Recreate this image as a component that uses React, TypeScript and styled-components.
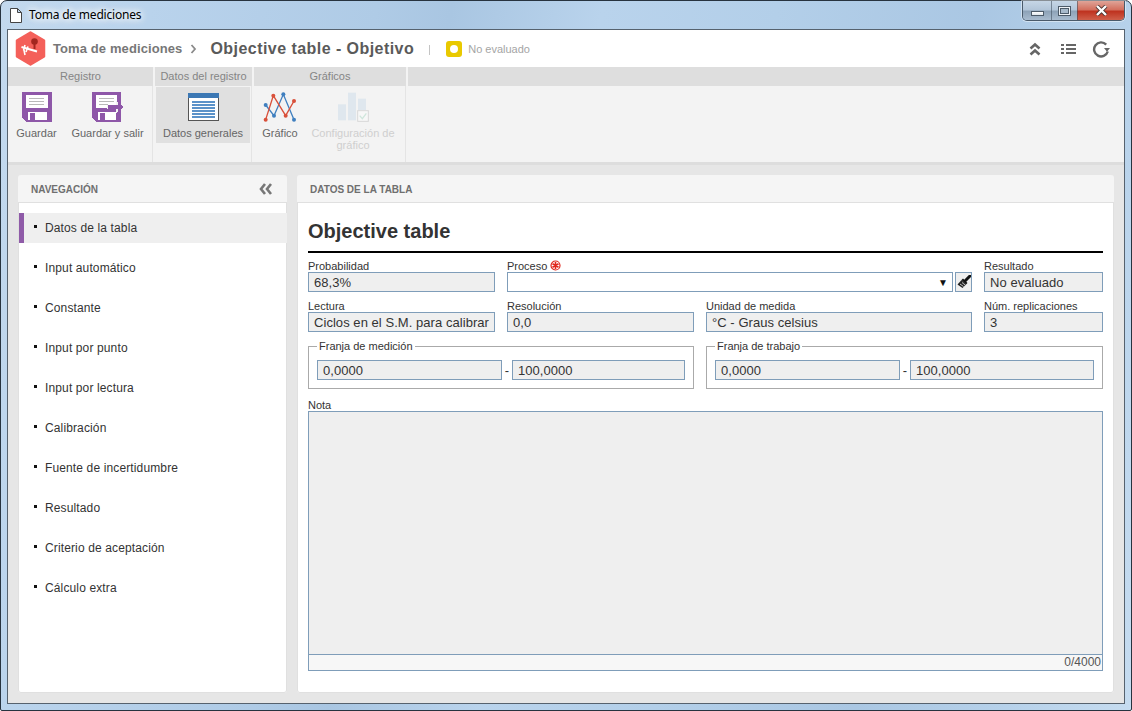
import React from "react";
import styled, { createGlobalStyle } from "styled-components";

const Global = createGlobalStyle`
  html, body { margin: 0; padding: 0; width: 1132px; height: 711px; overflow: hidden; background: #fff; }
  #root { width: 1132px; height: 711px; }
  * { box-sizing: border-box; }
`;

const Win = styled.div`
  width: 1132px; height: 711px;
  display: flex; flex-direction: column;
  border: 1px solid #27333f;
  border-radius: 7px 7px 2px 2px;
  padding: 0 6px 6px 6px;
  background: linear-gradient(100deg, #c3d9ee 0%, #b9d3ec 12%, #afcbe6 30%, #a9c6e2 36%, #b9d3ec 48%, #b3cfe9 62%, #aac7e3 78%, #b6d1ea 90%, #c6dcf0 100%);
  font-family: "Liberation Sans", Arial, sans-serif;
  color: #333;
`;
const TitleBar = styled.div`
  height: 28px; flex: none;
  display: flex; align-items: flex-start;
`;
const DocIcon = styled.svg`
  width: 12px; height: 15px; margin: 7px 0 0 3px; flex: none;
`;
const WinTitle = styled.div`
  margin: 6px 0 0 7px;
  font: 12px/16px "Noto Sans", "Open Sans", sans-serif;
  letter-spacing: -0.2px;
  color: #000;
  text-shadow: 0 0 6px #fff, 0 0 8px #fff, 0 0 10px #fff;
`;
const WinButtons = styled.div`
  margin-left: auto;
  display: flex; height: 20px;
  border: 1px solid #4a5a6a; border-top: none;
  border-radius: 0 0 5px 5px;
  overflow: hidden;
  box-shadow: 0 0 0 1px rgba(255,255,255,.45);
`;
const WinButton = styled.div<{ $w: number; $close?: boolean }>`
  width: ${p => p.$w}px; height: 100%;
  display: flex; align-items: center; justify-content: center;
  border-left: 1px solid rgba(60,75,90,.55);
  &:first-child { border-left: none; }
  background: ${p => p.$close
    ? "linear-gradient(#dfa498 0%, #d3705f 45%, #bf3320 55%, #cf5f4a 100%)"
    : "linear-gradient(#c6d6e6 0%, #b3c6d9 45%, #8ea3b8 55%, #a9bccf 100%)"};
`;
const MinGlyph = styled.div`
  width: 13px; height: 5px; margin-top: 6px;
  background: linear-gradient(#fff, #dfe6ec); border: 1px solid #4d5b69;
`;
const MaxGlyph = styled.div`
  width: 13px; height: 10px;
  background: #eef2f6; border: 1px solid #4d5b69;
  display: flex; align-items: center; justify-content: center;
  &::after { content: ""; width: 7px; height: 4px; background: #a8bacb; border: 1px solid #4d5b69; }
`;
const CloseGlyph = styled.svg`
  width: 13px; height: 11px;
`;

const Frame = styled.div`
  flex: 1; min-height: 0;
  display: flex; flex-direction: column;
  border: 1px solid #56626e;
  background: #e6e6e6;
`;
const Head = styled.header`
  height: 37px; flex: none;
  background: #fff;
  display: flex; align-items: center;
  padding: 0 14px 0 7px;
`;
const Logo = styled.svg`
  width: 31px; height: 35px; flex: none;
`;
const Crumb = styled.span`
  margin-left: 7px;
  font-size: 13px; font-weight: bold; color: #777;
  letter-spacing: 0.1px;
`;
const CrumbArrow = styled.svg`
  width: 7px; height: 10px; margin: 0 13px 0 8px; flex: none;
`;
const DocTitle = styled.span`
  font-size: 16px; font-weight: bold; color: #5a5a5a;
  letter-spacing: 0.45px;
`;
const Sep = styled.span`
  width: 1px; height: 10px; background: #c4c4c4; margin: 2px 16px 0 15px;
`;
const Badge = styled.span`
  width: 16px; height: 16px; border-radius: 3px; background: #e9c900;
  display: flex; align-items: center; justify-content: center; flex: none;
  &::after { content: ""; width: 8px; height: 8px; border-radius: 50%; background: #fff; }
`;
const BadgeText = styled.span`
  margin-left: 6px; font-size: 11px; color: #a5a5a5;
`;
const HeadTools = styled.div`
  margin-left: auto;
  display: flex; align-items: center; gap: 15px;
`;
const HeadIcon = styled.svg`
  width: 18px; height: 18px; flex: none; display: block;
`;

const Ribbon = styled.div`
  flex: none; display: flex; gap: 2px;
  background: #f3f3f3;
  border-bottom: 3px solid #dddddd;
  height: 98px;
`;
const Group = styled.section<{ $w?: number }>`
  ${p => (p.$w ? `width: ${p.$w}px; flex: none;` : "flex: 1;")}
  display: flex; flex-direction: column;
`;
const GroupLabel = styled.div`
  height: 19px; flex: none; background: #dedede;
  font-size: 11px; line-height: 19px; text-align: center; color: #858585;
`;
const GroupBody = styled.div`
  flex: 1; display: flex; align-items: flex-start;
  padding: 1px 0 0 0;
  border-right: 1px solid #e4e4e4;
`;
const RBtn = styled.div<{ $w: number; $active?: boolean; $off?: boolean }>`
  width: ${p => p.$w}px; height: 56px; flex: none;
  margin-left: ${p => (p.$active ? "1px" : "0")};
  background: ${p => (p.$active ? "#e0e0e0" : "transparent")};
  display: flex; flex-direction: column; align-items: center;
  font-size: 11px; line-height: 12px; text-align: center;
  color: ${p => (p.$off ? "#cfcfcf" : "#666")};
`;
const RIcon = styled.div`
  height: 40px; flex: none; display: flex; align-items: center; justify-content: center;
`;
const RText = styled.div`
  padding: 0 4px;
`;

const Main = styled.main`
  flex: 1; min-height: 0;
  display: flex; gap: 10px; padding: 10px;
`;
const Panel = styled.section<{ $w: number }>`
  width: ${p => p.$w}px; flex: none;
  background: #fff;
  border-radius: 3px;
  display: flex; flex-direction: column;
  box-shadow: 0 0 0 1px #e0e0e0 inset;
`;
const PanelHead = styled.div<{ $pad: number }>`
  height: 28px; flex: none;
  background: #f5f5f5;
  border-bottom: 1px solid #e0e0e0;
  border-radius: 3px 3px 0 0;
  display: flex; align-items: center; justify-content: space-between;
  padding: 1px 14px 0 ${p => p.$pad}px;
  font-size: 10px; font-weight: bold; color: #6f6f6f;
`;
const NavList = styled.nav`
  display: flex; flex-direction: column; gap: 10px; padding-top: 10px;
`;
const NavItem = styled.div<{ $active?: boolean }>`
  height: 30px; margin-left: 1px;
  display: flex; align-items: center;
  padding-left: ${p => (p.$active ? "10px" : "15px")};
  border-left: ${p => (p.$active ? "5px solid #8f5ba8" : "none")};
  background: ${p => (p.$active ? "#efefef" : "transparent")};
  font-size: 12px; color: #333;
  letter-spacing: 0.13px;
  &::before {
    content: ""; width: 3px; height: 3px; background: #111;
    margin: -3px 8px 0 0; flex: none;
  }
`;
const Content = styled.div`
  flex: 1; min-height: 0;
  display: flex; flex-direction: column;
  padding: 0 11px 22px 11px;
`;
const FormTitle = styled.h1`
  margin: 0; height: 50px; flex: none;
  border-bottom: 2px solid #000;
  font-size: 20px; font-weight: bold; color: #333;
  line-height: 57px;
`;
const Grid = styled.div`
  display: grid;
  grid-template-columns: 187px 187px 266px 119px;
  column-gap: 12px; row-gap: 8px;
  margin-top: 7px;
`;
const Field = styled.div<{ $span?: number }>`
  ${p => (p.$span ? `grid-column: span ${p.$span};` : "")}
  display: flex; flex-direction: column; min-width: 0;
`;
const Label = styled.label`
  height: 12px; font-size: 11px; line-height: 12px; color: #333; white-space: nowrap;
  display: flex; align-items: center; gap: 3px;
`;
const Req = styled.svg`
  width: 11px; height: 11px; flex: none; margin-top: -2px;
`;
const ReadBox = styled.input<{ $grow?: boolean; $w?: number }>`
  height: 20px; min-width: 0;
  ${p => (p.$w ? `width: ${p.$w}px; flex: none;` : "width: 100%;")}
  ${p => (p.$grow ? "flex: 1;" : "")}
  background: #efefef;
  border: 1px solid #7f9db9;
  padding: 0 0 0 5px; outline: none; border-radius: 0;
  font: 13px "Liberation Sans", Arial, sans-serif;
  letter-spacing: 0.05px;
  color: #333;
`;
const ProcessRow = styled.div`
  display: flex; gap: 2px; height: 20px;
`;
const Select = styled.div`
  flex: 1; background: #fff; border: 1px solid #7f9db9;
  display: flex; align-items: center; justify-content: flex-end;
  padding-right: 4px; font-size: 10px; color: #111;
`;
const BrushBtn = styled.div`
  width: 17px; flex: none; border: 1px solid #7f9db9; background: #efefef;
  display: flex; align-items: center; justify-content: center;
`;
const FieldsetRow = styled.div`
  display: grid; grid-template-columns: 386px 397px; column-gap: 12px;
  margin-top: 8px;
`;
const Fieldset = styled.fieldset`
  margin: 0; padding: 8px; min-width: 0;
  border: 1px solid #aaaaaa;
  display: flex; align-items: center;
`;
const Legend = styled.legend`
  padding: 0 2px; font-size: 11px; line-height: 12px; height: 12px; color: #333;
`;
const RangeRow = styled.div`
  display: flex; align-items: center; width: 100%;
`;
const Dash = styled.span`
  width: 10px; flex: none; text-align: center; font-size: 13px; color: #333;
`;
const NoteField = styled.div`
  flex: 1; min-height: 0; margin-top: 10px;
  display: flex; flex-direction: column;
`;
const NoteBox = styled.div`
  flex: 1; min-height: 0;
  display: flex; flex-direction: column;
  border: 1px solid #7f9db9;
  background: #efefef;
`;
const NoteArea = styled.div`
  flex: 1; min-height: 0;
`;
const Counter = styled.div`
  height: 16px; flex: none;
  border-top: 1px solid #7f9db9;
  background: #f7f7f7;
  text-align: right; font-size: 12px; line-height: 15px; color: #555;
  padding-right: 1px;
`;

const Floppy = ({ exit }: { exit?: boolean }) => (
  <svg width={exit ? 32 : 30} height="30" viewBox={exit ? "0 0 32 30" : "0 0 30 30"} shapeRendering="crispEdges">
    <path d={exit ? "M0 0H29V30H4L0 26Z" : "M0 0H30V30H4L0 26Z"} fill="#8e57a8" />
    <rect x="4" y="3" width={exit ? 21 : 22} height="13" fill="#fff" />
    <rect x="7" y="6" width="15" height="1" fill="#b9b9b9" />
    <rect x="7" y="9" width="15" height="1" fill="#b9b9b9" />
    <rect x="7" y="12" width={exit ? 9 : 15} height="1" fill="#b9b9b9" />
    <rect x="6" y="20" width={exit ? 18 : 19} height="8" fill="#fff" />
    <rect x="8" y="21" width="5" height="7" fill="#8e57a8" />
    {exit && (
      <>
        <path d="M16 13H25V9L32 15L25 21V17H16Z" fill="#f3f3f3" transform="translate(-1 0)" />
        <path d="M16 13H26V10L32 15L26 20V17H16Z" fill="#8e57a8" />
      </>
    )}
  </svg>
);

const Sheet = () => (
  <svg width="31" height="28" viewBox="0 0 31 28" shapeRendering="crispEdges">
    <rect x=".5" y=".5" width="30" height="27" fill="#fff" stroke="#555" />
    <rect x="0" y="0" width="31" height="5" fill="#3c78b4" />
    {[8, 11, 14, 17, 20, 23].map(y => <rect key={y} x="4" y={y} width="23" height="2" fill="#5b92c9" />)}
  </svg>
);

const LineChart = () => (
  <svg width="36" height="32" viewBox="36 18 108 96">
    <polyline points="47,60 72,92 100,28 132,104" fill="none" stroke="#3f7fbf" strokeWidth="4" />
    <polyline points="47,104 70,32 107,92 132,48" fill="none" stroke="#d9503a" strokeWidth="4" />
    {[[47,60],[72,92],[100,28],[132,104]].map(([x,y]) => <circle key={x} cx={x} cy={y} r="6" fill="#3f7fbf" />)}
    {[[47,104],[70,32],[107,92],[132,48]].map(([x,y]) => <circle key={x} cx={x} cy={y} r="6" fill="#d9503a" />)}
  </svg>
);

const BarsCheck = () => (
  <svg width="32" height="30" viewBox="264 20 96 90">
    <rect x="267" y="57" width="24" height="48" fill="#dfe7ee" />
    <rect x="297" y="22" width="24" height="83" fill="#dfe7ee" />
    <rect x="327" y="40" width="24" height="34" fill="#dfe7ee" />
    <rect x="326" y="76" width="32" height="32" fill="#f7f7f7" stroke="#d8d8d8" strokeWidth="3" />
    <path d="M332 91L340 100L352 84" fill="none" stroke="#cfe6dc" strokeWidth="4" />
  </svg>
);

const navItems = ["Datos de la tabla","Input automático","Constante","Input por punto","Input por lectura","Calibración","Fuente de incertidumbre","Resultado","Criterio de aceptación","Cálculo extra"];

export default function App() {
  return (
    <Win>
      <Global />
      <TitleBar>
        <DocIcon viewBox="0 0 12 15">
          <path d="M.5.5H7.5L11.5 4.5V14.5H.5Z M7.5.5V4.5H11.5" fill="#fff" stroke="#444" />
        </DocIcon>
        <WinTitle>Toma de mediciones</WinTitle>
        <WinButtons>
          <WinButton $w={28}><MinGlyph /></WinButton>
          <WinButton $w={26}><MaxGlyph /></WinButton>
          <WinButton $w={47} $close>
            <CloseGlyph viewBox="0 0 13 11">
              <path d="M2 1L11 10M11 1L2 10" stroke="#4a3330" strokeWidth="4" />
              <path d="M2 1L11 10M11 1L2 10" stroke="#fff" strokeWidth="2.4" />
            </CloseGlyph>
          </WinButton>
        </WinButtons>
      </TitleBar>
      <Frame>
        <Head>
          <Logo viewBox="0 0 31 35">
            <path d="M15.5 1.5L29 9.5V25.5L15.5 33.5L2 25.5V9.5Z" fill="#f4605a" stroke="#f4605a" strokeWidth="2.5" strokeLinejoin="round" />
            <path d="M6.5 16L22 20.5" stroke="#fff" strokeWidth="2" />
            <path d="M10 14L8.5 19.5M13 15.5L11 21M9 19L10 24" stroke="#fff" strokeWidth="1.6" fill="none" />
            <circle cx="19.5" cy="10.5" r="3.3" fill="#a3261f" />
            <rect x="18.5" y="13" width="2" height="5" fill="#a3261f" />
          </Logo>
          <Crumb>Toma de mediciones</Crumb>
          <CrumbArrow viewBox="0 0 7 10">
            <path d="M1.5 1L5 5L1.5 9" fill="none" stroke="#8a8a8a" strokeWidth="1.8" />
          </CrumbArrow>
          <DocTitle>Objective table - Objetivo</DocTitle>
          <Sep />
          <Badge />
          <BadgeText>No evaluado</BadgeText>
          <HeadTools>
            <HeadIcon viewBox="0 0 18 18">
              <path d="M4.5 8.5L9 4.5L13.5 8.5M4.5 14.5L9 10.5L13.5 14.5" fill="none" stroke="#666" strokeWidth="2.6" />
            </HeadIcon>
            <HeadIcon viewBox="0 0 18 18" shapeRendering="crispEdges">
              <g fill="#666">
                <rect x="2" y="4" width="3" height="2" /><rect x="7" y="4" width="10" height="2" />
                <rect x="2" y="8" width="3" height="2" /><rect x="7" y="8" width="10" height="2" />
                <rect x="2" y="12" width="3" height="2" /><rect x="7" y="12" width="10" height="2" />
              </g>
            </HeadIcon>
            <HeadIcon viewBox="0 0 18 18">
              <path d="M14.2 4.6A7 7 0 1 0 15.8 11.5" fill="none" stroke="#666" strokeWidth="2.4" />
              <path d="M12 8H18L15 11.8Z" fill="#666" />
            </HeadIcon>
          </HeadTools>
        </Head>
        <Ribbon>
          <Group $w={145}>
            <GroupLabel>Registro</GroupLabel>
            <GroupBody>
              <RBtn $w={57}><RIcon><Floppy /></RIcon><RText>Guardar</RText></RBtn>
              <RBtn $w={85}><RIcon><Floppy exit /></RIcon><RText>Guardar y salir</RText></RBtn>
            </GroupBody>
          </Group>
          <Group $w={97}>
            <GroupLabel>Datos del registro</GroupLabel>
            <GroupBody>
              <RBtn $w={94} $active><RIcon><Sheet /></RIcon><RText>Datos generales</RText></RBtn>
            </GroupBody>
          </Group>
          <Group $w={152}>
            <GroupLabel>Gráficos</GroupLabel>
            <GroupBody>
              <RBtn $w={52}><RIcon><LineChart /></RIcon><RText>Gráfico</RText></RBtn>
              <RBtn $w={94} $off><RIcon><BarsCheck /></RIcon><RText>Configuración de gráfico</RText></RBtn>
            </GroupBody>
          </Group>
          <Group>
            <GroupLabel />
          </Group>
        </Ribbon>
        <Main>
          <Panel $w={269}>
            <PanelHead $pad={13}>
              NAVEGACIÓN
              <svg width="14" height="12" viewBox="0 0 14 12">
                <path d="M6 1L2 6L6 11M12 1L8 6L12 11" fill="none" stroke="#777" strokeWidth="2.6" />
              </svg>
            </PanelHead>
            <NavList>
              {navItems.map((n, i) => <NavItem key={n} $active={i === 0}>{n}</NavItem>)}
            </NavList>
          </Panel>
          <Panel $w={817}>
            <PanelHead $pad={13}>DATOS DE LA TABLA</PanelHead>
            <Content>
              <FormTitle>Objective table</FormTitle>
              <Grid>
                <Field>
                  <Label>Probabilidad</Label>
                  <ReadBox readOnly value="68,3%" />
                </Field>
                <Field $span={2}>
                  <Label>
                    Proceso
                    <Req viewBox="0 0 11 11">
                      <circle cx="5.5" cy="5.5" r="4.5" fill="#fff" stroke="#e0261c" strokeWidth="1.2" />
                      <path d="M5.5 2V9M2.5 3.7L8.5 7.3M8.5 3.7L2.5 7.3" stroke="#e0261c" strokeWidth="1.6" />
                    </Req>
                  </Label>
                  <ProcessRow>
                    <Select>▼</Select>
                    <BrushBtn>
                      <svg width="14" height="14" viewBox="0 0 14 14">
                        <path d="M13 1L8.5 5.5" stroke="#111" strokeWidth="3" strokeLinecap="round" />
                        <path d="M6 3.5L10.5 8L9 9.5L4.5 5Z" fill="#111" />
                        <path d="M4.5 5L9 9.5L5.5 13L0.5 9.5Z" fill="#222" />
                        <path d="M3 9L6.5 11.5M5 7.5L8 10" stroke="#efefef" strokeWidth=".8" />
                      </svg>
                    </BrushBtn>
                  </ProcessRow>
                </Field>
                <Field>
                  <Label>Resultado</Label>
                  <ReadBox readOnly value="No evaluado" />
                </Field>
                <Field>
                  <Label>Lectura</Label>
                  <ReadBox readOnly value="Ciclos en el S.M. para calibrar" />
                </Field>
                <Field>
                  <Label>Resolución</Label>
                  <ReadBox readOnly value="0,0" />
                </Field>
                <Field>
                  <Label>Unidad de medida</Label>
                  <ReadBox readOnly value="°C - Graus celsius" />
                </Field>
                <Field>
                  <Label>Núm. replicaciones</Label>
                  <ReadBox readOnly value="3" />
                </Field>
              </Grid>
              <FieldsetRow>
                <Fieldset>
                  <Legend>Franja de medición</Legend>
                  <RangeRow>
                    <ReadBox readOnly value="0,0000" $w={185} />
                    <Dash>-</Dash>
                    <ReadBox readOnly value="100,0000" $grow />
                  </RangeRow>
                </Fieldset>
                <Fieldset>
                  <Legend>Franja de trabajo</Legend>
                  <RangeRow>
                    <ReadBox readOnly value="0,0000" $w={185} />
                    <Dash>-</Dash>
                    <ReadBox readOnly value="100,0000" $grow />
                  </RangeRow>
                </Fieldset>
              </FieldsetRow>
              <NoteField>
                <Label>Nota</Label>
                <NoteBox>
                  <NoteArea />
                  <Counter>0/4000</Counter>
                </NoteBox>
              </NoteField>
            </Content>
          </Panel>
        </Main>
      </Frame>
    </Win>
  );
}
